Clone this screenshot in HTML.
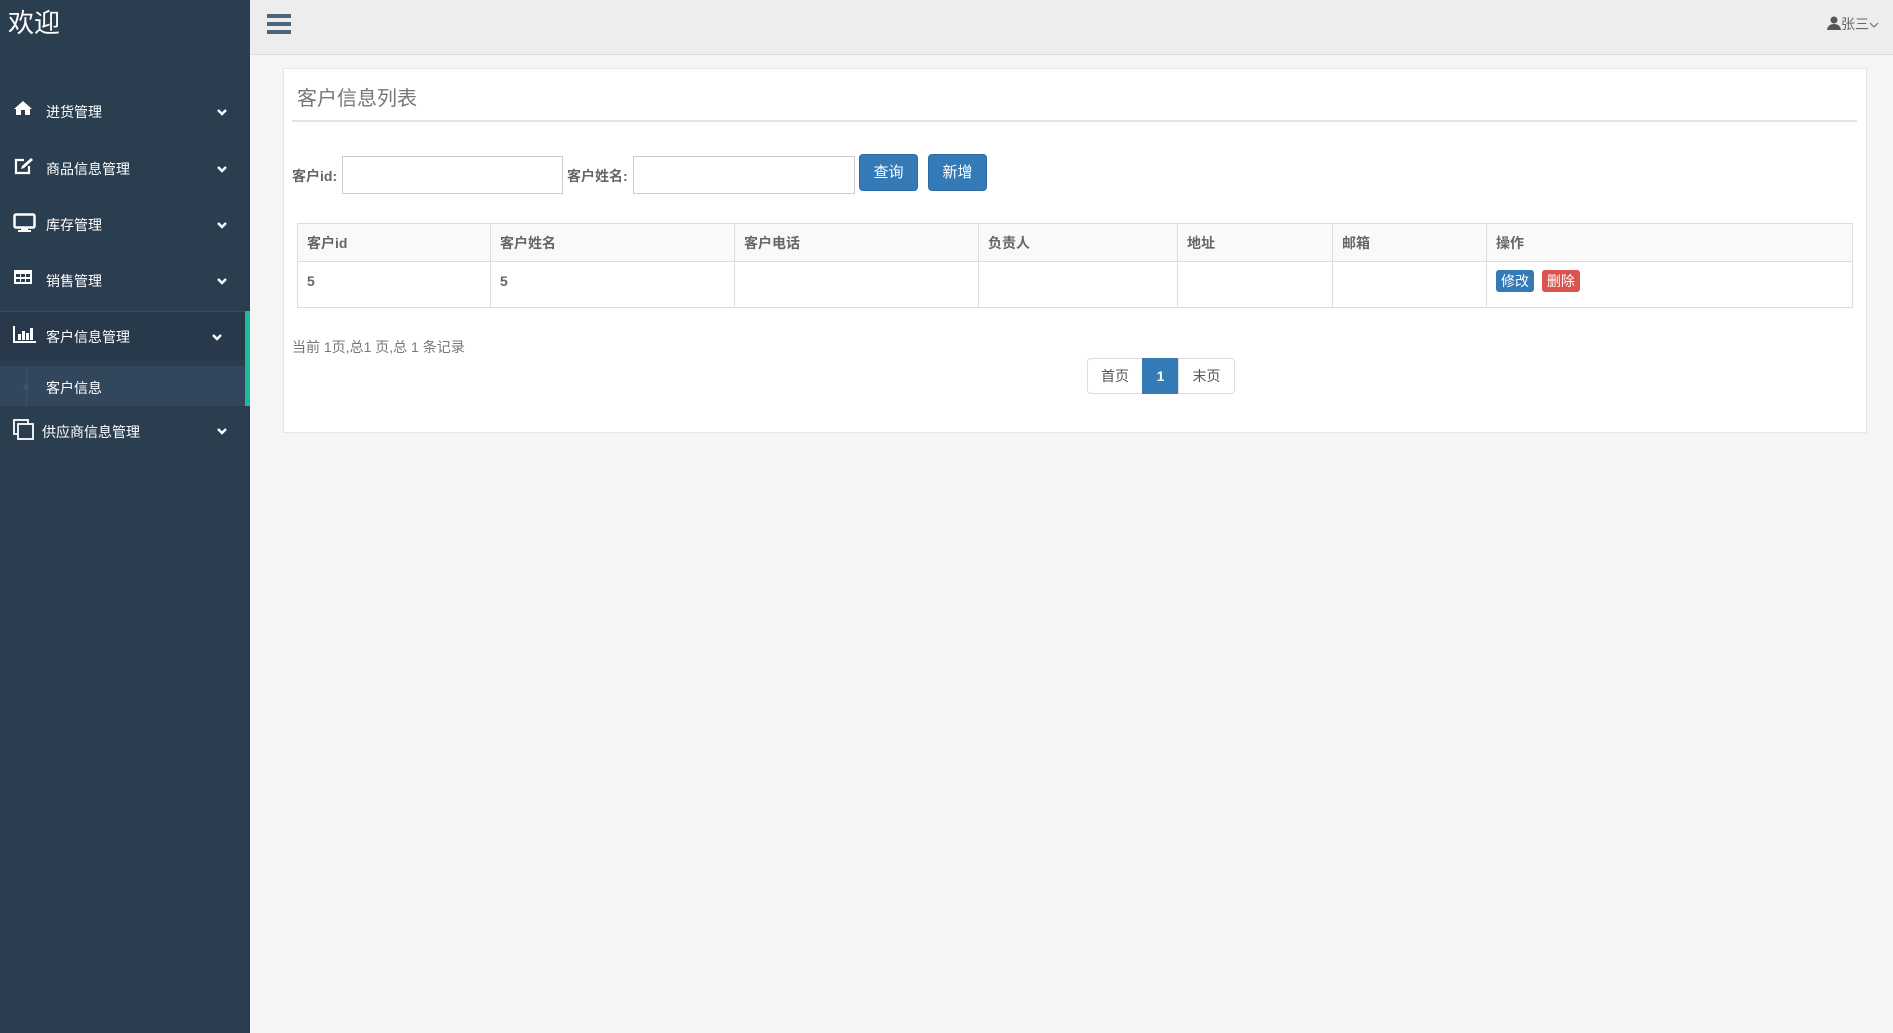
<!DOCTYPE html>
<html><head><meta charset="utf-8"><style>
*{box-sizing:border-box;margin:0;padding:0}
body{width:1893px;height:1033px;background:#f5f5f5;font-family:"Liberation Sans","Noto Sans CJK SC",sans-serif;position:relative;overflow:hidden;color:#555}
.a{position:absolute}
#side{left:0;top:0;width:250px;height:1033px;background:#2b3e50}
.mi{position:absolute;left:0;width:250px;height:56px;color:#fff;font-size:14px}
.mi .ic{position:absolute;left:13px;top:17px}
.mi .t{position:absolute;left:46px;top:19px}
.mi .ch{position:absolute;left:216px;top:24px}
#top{left:250px;top:0;width:1643px;height:55px;background:#ededed;border-bottom:1px solid #ddd}
#panel{left:283px;top:68px;width:1584px;height:365px;background:#fff;border:1px solid #e6e6e6}
.lbl{font-size:14px;font-weight:bold;color:#666}
.inp{background:#fff;border:1px solid #ccc}
.btn{background:#337ab7;color:#fff;border-radius:4px;font-size:15px;text-align:center;border:1px solid #2e6da4}
table{border-collapse:collapse;position:absolute;left:297px;top:223px;width:1556px;font-size:14px}
td,th{border:1px solid #ddd;text-align:left;padding:0 9px;font-weight:bold;color:#666}
th{height:38px;background:#f9f9f9}
td{height:46px;vertical-align:top;padding-top:11px}
.pg{position:absolute;top:358px;height:36px;border:1px solid #ddd;background:#fff;font-size:14px;text-align:center;line-height:34px;color:#555}
</style></head><body>
<div id="side" class="a">
<div class="a" style="left:8px;top:3px;color:#fff;font-size:26px">欢迎</div>
<div class="mi" style="top:83px"><svg class="ic" width="20" height="16" viewBox="0 0 20 16"><path d="M10 1 L1 9 L3 9 L3 15 L8 15 L8 10 L12 10 L12 15 L17 15 L17 9 L19 9 Z" fill="#fff"/></svg><span class="t">进货管理</span><svg class="ch" width="12" height="10"><path d="M2 3 L6 7 L10 3" stroke="#fff" stroke-width="2.4" fill="none"/></svg></div>
<div class="mi" style="top:140px"><svg class="ic" width="22" height="18" viewBox="0 0 22 18"><path d="M11 3 H3 V16 H16 V9" stroke="#fff" stroke-width="2.2" fill="none"/><path d="M8 12 L9 9 L18 1 L20 3 L11 11 Z" fill="#fff"/></svg><span class="t">商品信息管理</span><svg class="ch" width="12" height="10"><path d="M2 3 L6 7 L10 3" stroke="#fff" stroke-width="2.4" fill="none"/></svg></div>
<div class="mi" style="top:196px"><svg class="ic" width="24" height="20" viewBox="0 0 24 20"><rect x="1.5" y="1.5" width="20" height="13" rx="1.5" stroke="#fff" stroke-width="2.5" fill="none"/><rect x="8" y="15" width="7" height="3" fill="#fff"/><rect x="5" y="17" width="13" height="2" fill="#fff"/></svg><span class="t">库存管理</span><svg class="ch" width="12" height="10"><path d="M2 3 L6 7 L10 3" stroke="#fff" stroke-width="2.4" fill="none"/></svg></div>
<div class="mi" style="top:252px"><svg class="ic" width="20" height="16" viewBox="0 0 20 16"><rect x="1" y="1" width="18" height="14" fill="#fff"/><g fill="#2b3e50"><rect x="3" y="5" width="4" height="3"/><rect x="8" y="5" width="4" height="3"/><rect x="13" y="5" width="4" height="3"/><rect x="3" y="10" width="4" height="3"/><rect x="8" y="10" width="4" height="3"/><rect x="13" y="10" width="4" height="3"/></g></svg><span class="t">销售管理</span><svg class="ch" width="12" height="10"><path d="M2 3 L6 7 L10 3" stroke="#fff" stroke-width="2.4" fill="none"/></svg></div>
<div class="a" style="left:0;top:311px;width:245px;height:49px;background:#27394a;border-top:1px solid #3a4d5f"></div>
<div class="mi" style="top:308px"><svg class="ic" width="24" height="18" viewBox="0 0 24 18"><path d="M1 1 V17 H23" stroke="#fff" stroke-width="2" fill="none"/><g fill="#fff"><rect x="5" y="9" width="3" height="6"/><rect x="9" y="6" width="3" height="9"/><rect x="13" y="8" width="3" height="7"/><rect x="17" y="3" width="3" height="12"/></g></svg><span class="t">客户信息管理</span><svg class="ch" style="left:211px" width="12" height="10"><path d="M2 3 L6 7 L10 3" stroke="#fff" stroke-width="2.4" fill="none"/></svg></div>
<div class="a" style="left:0;top:366px;width:245px;height:40px;background:#32475b"></div>
<div class="a" style="left:26px;top:366px;width:1px;height:40px;background:#3d5266"></div>
<div class="a" style="left:23px;top:384px;width:6px;height:6px;border-radius:3px;background:#3d5266"></div>
<div class="a" style="left:46px;top:378px;color:#fff;font-size:14px">客户信息</div>
<div class="a" style="left:245px;top:311px;width:5px;height:95px;background:#1abc9c"></div>
<div class="mi" style="top:402px"><svg class="ic" width="22" height="22" viewBox="0 0 22 22"><rect x="1" y="1" width="14" height="14" stroke="#fff" stroke-width="1.8" fill="none"/><rect x="5" y="5" width="15" height="15" fill="#2b3e50" stroke="#fff" stroke-width="1.8"/></svg><span class="t" style="left:42px;top:20px">供应商信息管理</span><svg class="ch" width="12" height="10"><path d="M2 3 L6 7 L10 3" stroke="#fff" stroke-width="2.4" fill="none"/></svg></div>
</div>
<div id="top" class="a">
<div class="a" style="left:17px;top:14px;width:24px;height:4px;background:#4e647a"></div>
<div class="a" style="left:17px;top:22px;width:24px;height:4px;background:#4e647a"></div>
<div class="a" style="left:17px;top:30px;width:24px;height:4px;background:#4e647a"></div>
<div class="a" style="left:1577px;top:14px;font-size:14px;color:#666"><svg width="14" height="14" viewBox="0 0 14 14" style="vertical-align:-1px"><circle cx="7" cy="4" r="3.5" fill="#555"/><path d="M0 14 Q1 8 7 8 Q13 8 14 14 Z" fill="#555"/></svg>张三<svg width="10" height="8"><path d="M1 2 L5 6 L9 2" stroke="#666" fill="none"/></svg></div>
</div>
<div id="panel" class="a"></div>
<div class="a" style="left:297px;top:82px;font-size:20px;color:#777">客户信息列表</div>
<div class="a" style="left:292px;top:120px;width:1565px;height:2px;background:#e5e5e5"></div>
<div class="a lbl" style="left:292px;top:166px">客户id:</div>
<div class="a inp" style="left:342px;top:156px;width:221px;height:38px"></div>
<div class="a lbl" style="left:567px;top:166px">客户姓名:</div>
<div class="a inp" style="left:633px;top:156px;width:222px;height:38px"></div>
<div class="a btn" style="left:859px;top:154px;width:59px;height:37px;line-height:35px">查询</div>
<div class="a btn" style="left:928px;top:154px;width:59px;height:37px;line-height:35px">新增</div>
<table><tr><th style="width:193px">客户id</th><th style="width:244px">客户姓名</th><th style="width:244px">客户电话</th><th style="width:199px">负责人</th><th style="width:155px">地址</th><th style="width:154px">邮箱</th><th>操作</th></tr>
<tr><td>5</td><td>5</td><td></td><td></td><td></td><td></td><td style="padding-top:8px"><span style="display:inline-block;background:#337ab7;color:#fff;border-radius:3px;padding:2px 5px;font-weight:normal;font-size:14px;line-height:18px">修改</span> <span style="display:inline-block;margin-left:4px;background:#d9534f;color:#fff;border-radius:3px;padding:2px 5px;font-weight:normal;font-size:14px;line-height:18px">删除</span></td></tr></table>
<div class="a" style="left:292px;top:337px;font-size:14px;color:#777">当前 1页,总1 页,总 1 条记录</div>
<div class="pg" style="left:1087px;width:56px;border-radius:4px 0 0 4px">首页</div>
<div class="pg" style="left:1142px;width:37px;background:#337ab7;border-color:#337ab7;color:#fff;font-weight:bold">1</div>
<div class="pg" style="left:1178px;width:57px;border-radius:0 4px 4px 0">末页</div>
</body></html>
